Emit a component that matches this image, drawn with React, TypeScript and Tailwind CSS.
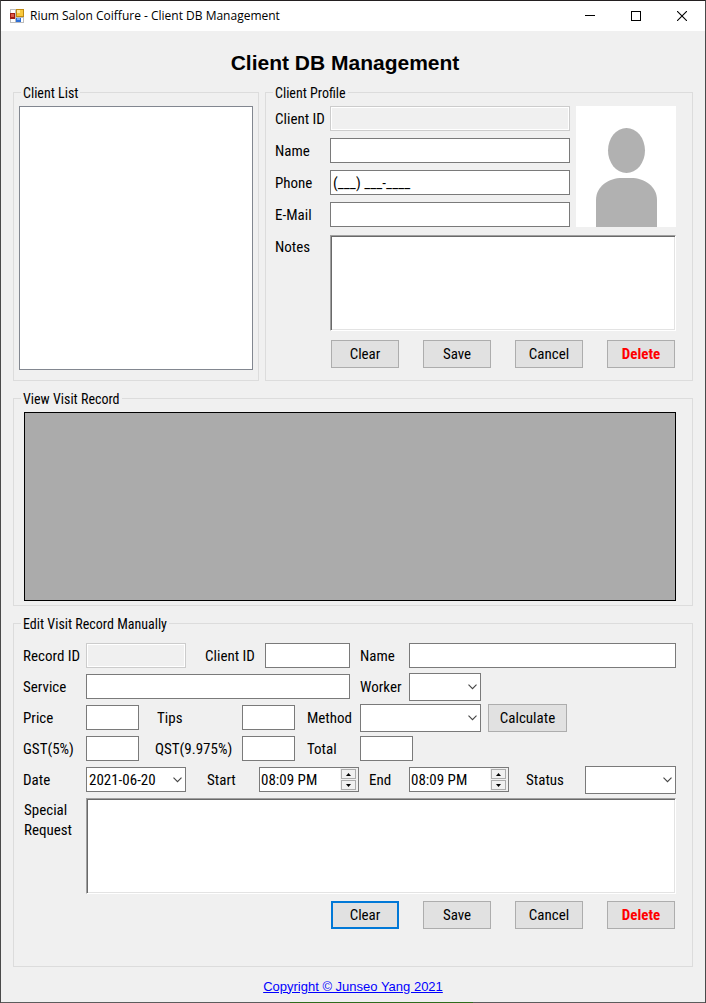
import type { ReactNode } from "react";

const FIELD = "h-[25px] min-w-0 border border-[#7a7a7a] bg-white px-[2px] text-black outline-none";
const READONLY = "h-[25px] min-w-0 border border-[#cccccc] bg-[#f0f0f0] px-[2px] shadow-[inset_0_0_0_1px_#ffffff] outline-none";
const MEMO =
  "block h-[96px] min-w-0 flex-1 resize-none border border-t-[#a0a0a0] border-l-[#a0a0a0] border-r-white border-b-white bg-white p-1 shadow-[inset_1px_1px_0_#696969,inset_-1px_-1px_0_#e3e3e3] outline-none";
const ROW = "flex h-[31px] items-center whitespace-nowrap";

function Group({ title, className, children }: { title: string; className: string; children: ReactNode }) {
  return (
    <fieldset className="min-w-0 border border-[#dcdcdc]">
      <legend className="ml-[7px] h-[20px] px-[2px] pt-[2px] text-[14px] leading-[18px]">{title}</legend>
      <div className={className}>{children}</div>
    </fieldset>
  );
}

function Chevron() {
  return (
    <svg className="pointer-events-none absolute top-1/2 right-1 -mt-[3px]" width="9" height="6" viewBox="0 0 9 6" aria-hidden="true">
      <path d="M0.5 0.7 L4.5 4.7 L8.5 0.7" fill="none" stroke="#444444" strokeWidth="1.1" />
    </svg>
  );
}

function Combo({ id, className }: { id: string; className: string }) {
  return (
    <div className={`relative h-[28px] ${className}`}>
      <select id={id} defaultValue="" className="block h-full w-full appearance-none border border-[#7a7a7a] bg-white px-[2px] outline-none">
        <option value=""></option>
      </select>
      <Chevron />
    </div>
  );
}

function TimeField({ id }: { id: string }) {
  return (
    <div className="flex h-[25px] w-[100px] border border-[#7a7a7a] bg-white">
      <input id={id} defaultValue="08:09 PM" className="min-w-0 flex-1 bg-transparent pl-px outline-none" />
      <div className="flex w-[18px] flex-col gap-px bg-[#f0f0f0] p-px pr-[2px]">
        <button type="button" aria-label="Increase" className="flex flex-1 items-center justify-center border border-[#acacac] bg-[#f0f0f0]">
          <svg width="5" height="3" viewBox="0 0 5 3" aria-hidden="true"><path d="M0 3 L2.5 0 L5 3 Z" fill="#000" /></svg>
        </button>
        <button type="button" aria-label="Decrease" className="flex flex-1 items-center justify-center border border-[#acacac] bg-[#f0f0f0]">
          <svg width="5" height="3" viewBox="0 0 5 3" aria-hidden="true"><path d="M0 0 L2.5 3 L5 0 Z" fill="#000" /></svg>
        </button>
      </div>
    </div>
  );
}

function Actions({ clearFocused = false }: { clearFocused?: boolean }) {
  const base = "h-[28px] w-[68px] bg-[#e1e1e1]";
  return (
    <div className="flex justify-end gap-6 pr-px">
      <button type="button" className={`${base} ${clearFocused ? "border-2 border-[#0078d7]" : "border border-[#adadad]"}`}>Clear</button>
      <button type="button" className={`${base} border border-[#adadad]`}>Save</button>
      <button type="button" className={`${base} border border-[#adadad]`}>Cancel</button>
      <button type="button" className={`${base} border border-[#adadad] font-bold text-[#ff0000]`}>Delete</button>
    </div>
  );
}

function AppIcon() {
  return (
    <svg width="14" height="14" viewBox="0 0 14 14" aria-hidden="true">
      <rect width="14" height="14" fill="#bdbdbd" />
      <rect x="1" y="1" width="4" height="3" fill="#fff" />
      <rect x="1" y="10" width="4" height="3" fill="#fff" />
      <rect x="6" y="9" width="7" height="4" fill="#fff" />
      <rect x="0" y="4" width="5" height="6" fill="#a01c10" />
      <rect x="1" y="5" width="3" height="3" fill="#dc5a48" />
      <rect x="6" y="0" width="8" height="8" fill="#c08a10" />
      <rect x="7" y="1" width="6" height="6" fill="#f8c83c" />
      <rect x="7" y="1" width="3" height="3" fill="#fde79a" />
      <rect x="6" y="9" width="5" height="4" fill="#2e6fd6" />
      <rect x="7" y="9" width="3" height="2" fill="#7fb0f4" />
    </svg>
  );
}

export default function App() {
  return (
    <div className="flex min-h-screen flex-col border-x border-t border-x-[#4a4a4a] border-t-[#231f20] bg-[#f0f0f0] font-['Roboto_Condensed','Liberation_Sans',sans-serif] text-[15px] leading-[20px] text-black">
      <header className="flex h-[30px] items-center bg-white pl-[9px]">
        <AppIcon />
        <span className="ml-[6px] flex-1 font-['Open_Sans',sans-serif] text-[12px]">Rium Salon Coiffure - Client DB Management</span>
        <button type="button" aria-label="Minimize" className="flex h-full w-[46px] items-center justify-center">
          <svg width="10" height="10" viewBox="0 0 10 10" aria-hidden="true"><path d="M0 4.5H10" stroke="#000" /></svg>
        </button>
        <button type="button" aria-label="Maximize" className="flex h-full w-[46px] items-center justify-center">
          <svg width="10" height="10" viewBox="0 0 10 10" aria-hidden="true"><rect x="0.5" y="0.5" width="9" height="9" fill="none" stroke="#000" /></svg>
        </button>
        <button type="button" aria-label="Close" className="flex h-full w-[46px] items-center justify-center">
          <svg width="10" height="10" viewBox="0 0 10 10" aria-hidden="true"><path d="M0 0L10 10M10 0L0 10" stroke="#000" strokeWidth="1.1" /></svg>
        </button>
      </header>

      <main className="flex flex-1 flex-col px-3">
        <h1 className="pt-5 pr-4 pb-[7px] text-center font-['Liberation_Sans',sans-serif] text-[21px] leading-[24px] font-bold">
          Client DB Management
        </h1>

        <div className="flex flex-col gap-[7px]">
          <div className="grid grid-cols-[246px_minmax(0,1fr)] gap-[6px]">
            <Group title="Client List" className="px-[5px] pt-1 pb-[10px]">
              <select size={12} aria-label="Client List" className="block h-[264px] w-full border border-[#828790] bg-white outline-none"></select>
            </Group>

            <Group title="Client Profile" className="pr-4 pb-3 pl-[9px]">
              <div className="flex gap-[6px] pt-1">
                <div className="grid flex-1 grid-cols-[55px_minmax(0,1fr)] items-center gap-y-[7px] whitespace-nowrap">
                  <label htmlFor="clientId">Client ID</label>
                  <input id="clientId" readOnly className={READONLY} />
                  <label htmlFor="name">Name</label>
                  <input id="name" className={FIELD} />
                  <label htmlFor="phone">Phone</label>
                  <input id="phone" defaultValue="(___) ___-____" className={FIELD} />
                  <label htmlFor="email">E-Mail</label>
                  <input id="email" className={FIELD} />
                </div>
                <svg width="100" height="121" viewBox="0 0 100 121" role="img" aria-label="Client photo">
                  <rect width="100" height="121" fill="#fff" />
                  <ellipse cx="50.5" cy="44.5" rx="18.5" ry="22.5" fill="#b1b1b1" />
                  <path d="M20 121V94C20 80 33 72 46 72H55C68 72 81 80 81 94V121Z" fill="#b1b1b1" />
                </svg>
              </div>
              <div className="flex pt-2">
                <label htmlFor="notes" className="w-[55px] pt-[2px]">Notes</label>
                <textarea id="notes" className={MEMO} />
              </div>
              <div className="pt-[9px]">
                <Actions />
              </div>
            </Group>
          </div>

          <Group title="View Visit Record" className="pt-1 pr-4 pb-1 pl-[10px]">
            <div className="h-[189px] border border-black bg-[#ababab]" role="grid" aria-label="Visit records" />
          </Group>

          <Group title="Edit Visit Record Manually" className="pr-4 pb-[37px] pl-[9px]">
            <div className="pt-[7px]">
              <div className={ROW}>
                <label htmlFor="recordId" className="w-[63px]">Record ID</label>
                <input id="recordId" readOnly className={`${READONLY} w-[100px]`} />
                <label htmlFor="visitClientId" className="w-[79px] pl-[19px]">Client ID</label>
                <input id="visitClientId" className={`${FIELD} w-[85px]`} />
                <label htmlFor="visitName" className="w-[59px] pl-[10px]">Name</label>
                <input id="visitName" className={`${FIELD} flex-1`} />
              </div>
              <div className={ROW}>
                <label htmlFor="service" className="w-[63px]">Service</label>
                <input id="service" className={`${FIELD} w-[264px]`} />
                <label htmlFor="worker" className="w-[59px] pl-[10px]">Worker</label>
                <Combo id="worker" className="w-[72px]" />
              </div>
              <div className={ROW}>
                <label htmlFor="price" className="w-[63px]">Price</label>
                <input id="price" className={`${FIELD} w-[53px]`} />
                <label htmlFor="tips" className="w-[103px] pl-[18px]">Tips</label>
                <input id="tips" className={`${FIELD} w-[53px]`} />
                <label htmlFor="method" className="w-[65px] pl-3">Method</label>
                <Combo id="method" className="w-[121px]" />
                <button type="button" className="ml-[7px] h-[28px] w-[79px] border border-[#adadad] bg-[#e1e1e1]">Calculate</button>
              </div>
              <div className={ROW}>
                <label htmlFor="gst" className="w-[63px]">GST(5%)</label>
                <input id="gst" className={`${FIELD} w-[53px]`} />
                <label htmlFor="qst" className="w-[103px] pl-4">QST(9.975%)</label>
                <input id="qst" className={`${FIELD} w-[53px]`} />
                <label htmlFor="total" className="w-[65px] pl-3">Total</label>
                <input id="total" className={`${FIELD} w-[53px]`} />
              </div>
              <div className={ROW}>
                <label htmlFor="date" className="w-[63px]">Date</label>
                <div className="relative w-[100px]">
                  <input id="date" defaultValue="2021-06-20" className={`${FIELD} block w-full`} />
                  <Chevron />
                </div>
                <label htmlFor="start" className="w-[73px] pl-[21px]">Start</label>
                <TimeField id="start" />
                <label htmlFor="end" className="w-[50px] pl-[10px]">End</label>
                <TimeField id="end" />
                <label htmlFor="status" className="w-[76px] pl-[17px]">Status</label>
                <Combo id="status" className="flex-1" />
              </div>
            </div>
            <div className="flex pt-[3px]">
              <label htmlFor="request" className="w-[63px] pt-[2px] pl-px">Special<br />Request</label>
              <textarea id="request" className={MEMO} />
            </div>
            <div className="pt-[7px]">
              <Actions clearFocused />
            </div>
          </Group>
        </div>

        <footer className="flex flex-1 items-center justify-center pt-1 font-['Liberation_Sans',sans-serif] text-[13px] leading-[16px]">
          <a href="#copyright" className="text-[#0000ff] underline">Copyright © Junseo Yang 2021</a>
        </footer>
      </main>
      <div className="h-px bg-[linear-gradient(90deg,#5c5c5c_41%,#2f6b1c_41%,#2f6b1c_67%,#5c5c5c_67%)]" />
    </div>
  );
}
